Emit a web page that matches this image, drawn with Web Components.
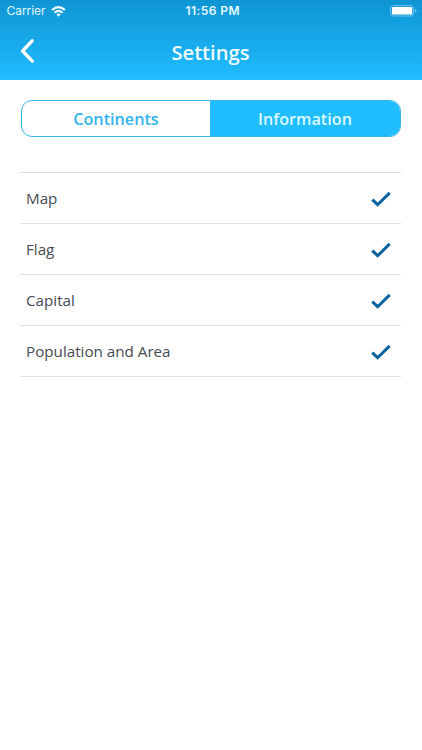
<!DOCTYPE html>
<html lang="en"><head><meta charset="utf-8"><title>Settings</title>
<style>
html,body{margin:0;background:#fff}
body{height:750px;overflow:hidden;font-family:"Open Sans","Noto Sans",sans-serif}
</style></head><body>
<settings-screen></settings-screen>
<script>
const define = (name, html) => customElements.define(name, class extends HTMLElement {
  constructor() {
    super();
    const t = document.createElement('template');
    t.innerHTML = html;
    this.attachShadow({mode: 'open'}).append(t.content.cloneNode(true));
  }
});
define('status-bar', `<style>
:host{display:grid;grid-template-columns:1fr auto 1fr;align-items:center;height:22px;padding:0 5px 0 6.5px;box-sizing:border-box;font:12px/22px Inter,sans-serif;color:#e4faff}
.left{display:flex;align-items:center;gap:6px}
.carrier{letter-spacing:-.05px}
.time{font-weight:600;font-size:12px;letter-spacing:.45px;padding-left:2px}
.battery{justify-self:end;display:block}
svg{display:block}
</style>
<div class="left"><span class="carrier">Carrier</span>
<svg width="15" height="11" viewBox="0 0 15 11" fill="none" stroke="#f2fcff" stroke-width="2"><path d="M1 4.1Q7.5-1.8 14 4.1M3.4 6.7Q7.5 3.1 11.6 6.7"/><path d="M5.3 8.4Q7.5 6.6 9.7 8.4L7.5 10.7Z" fill="#f2fcff" stroke="none"/></svg></div>
<span class="time">11:56 PM</span>
<svg class="battery" width="27" height="12" viewBox="0 0 27 12"><rect x=".6" y=".6" width="23" height="10.4" rx="2.6" fill="none" stroke="#71c4eb"/><rect x="2" y="2" width="20.2" height="7.6" rx="1.2" fill="#fff"/><path d="M25 4q1.6.4 1.6 1.8T25 7.6Z" fill="#71c4eb"/></svg>`);
define('nav-bar', `<style>
:host{display:grid;grid-template-columns:1fr auto 1fr;align-items:center;height:58px;padding:0 21px 0 20px;box-sizing:border-box;color:#effcff}
.title{font-size:20.2px;font-weight:600;line-height:28px;padding-top:2px}
svg{display:block}
</style><svg width="16" height="26" viewBox="0 0 16 26" fill="none" stroke="#fff" stroke-width="3.4" stroke-linecap="round" stroke-linejoin="round"><path d="M12.3 2.7L2.6 13l9.7 10.2"/></svg><span class="title"><slot></slot></span>`);
define('segment-control', `<style>
:host{display:grid;grid-template-columns:188px 1fr;height:37px;box-sizing:border-box;border:1px solid #38b6ec;border-radius:11px;overflow:hidden;font-size:16.2px;font-weight:600;line-height:36px;text-align:center;background:#fff}
.off{color:#35b5ed}.on{color:#dcf9ff;background:#20bdff}
</style><div class="off"><slot name="first"></slot></div><div class="on"><slot name="second"></slot></div>`);
define('check-row', `<style>
:host{display:flex;align-items:center;justify-content:space-between;height:51px;box-sizing:border-box;border-bottom:1px solid #dcdddf;padding:0 10px 0 5px;font-size:15.2px;color:#454b51}
svg{display:block;margin-top:2px}
span{line-height:20px}
</style><span><slot></slot></span><svg width="20" height="17" viewBox="0 0 20 17" fill="none" stroke="#0864a0" stroke-width="3"><path d="M1.3 8.6L6.6 13.7L18.7 1.9"/></svg>`);
define('settings-screen', `<style>
:host{display:block;width:422px}
header{height:80px;background:linear-gradient(#0e94d3,#20bdff)}
main{padding:20px 21px 0}
.list{margin-top:35px;border-top:1px solid #dcdddf}
</style><header><status-bar></status-bar><nav-bar>Settings</nav-bar></header>
<main><segment-control><span slot="first">Continents</span><span slot="second">Information</span></segment-control>
<div class="list"><check-row>Map</check-row><check-row>Flag</check-row><check-row>Capital</check-row><check-row>Population and Area</check-row></div></main>`);
</script></body></html>
